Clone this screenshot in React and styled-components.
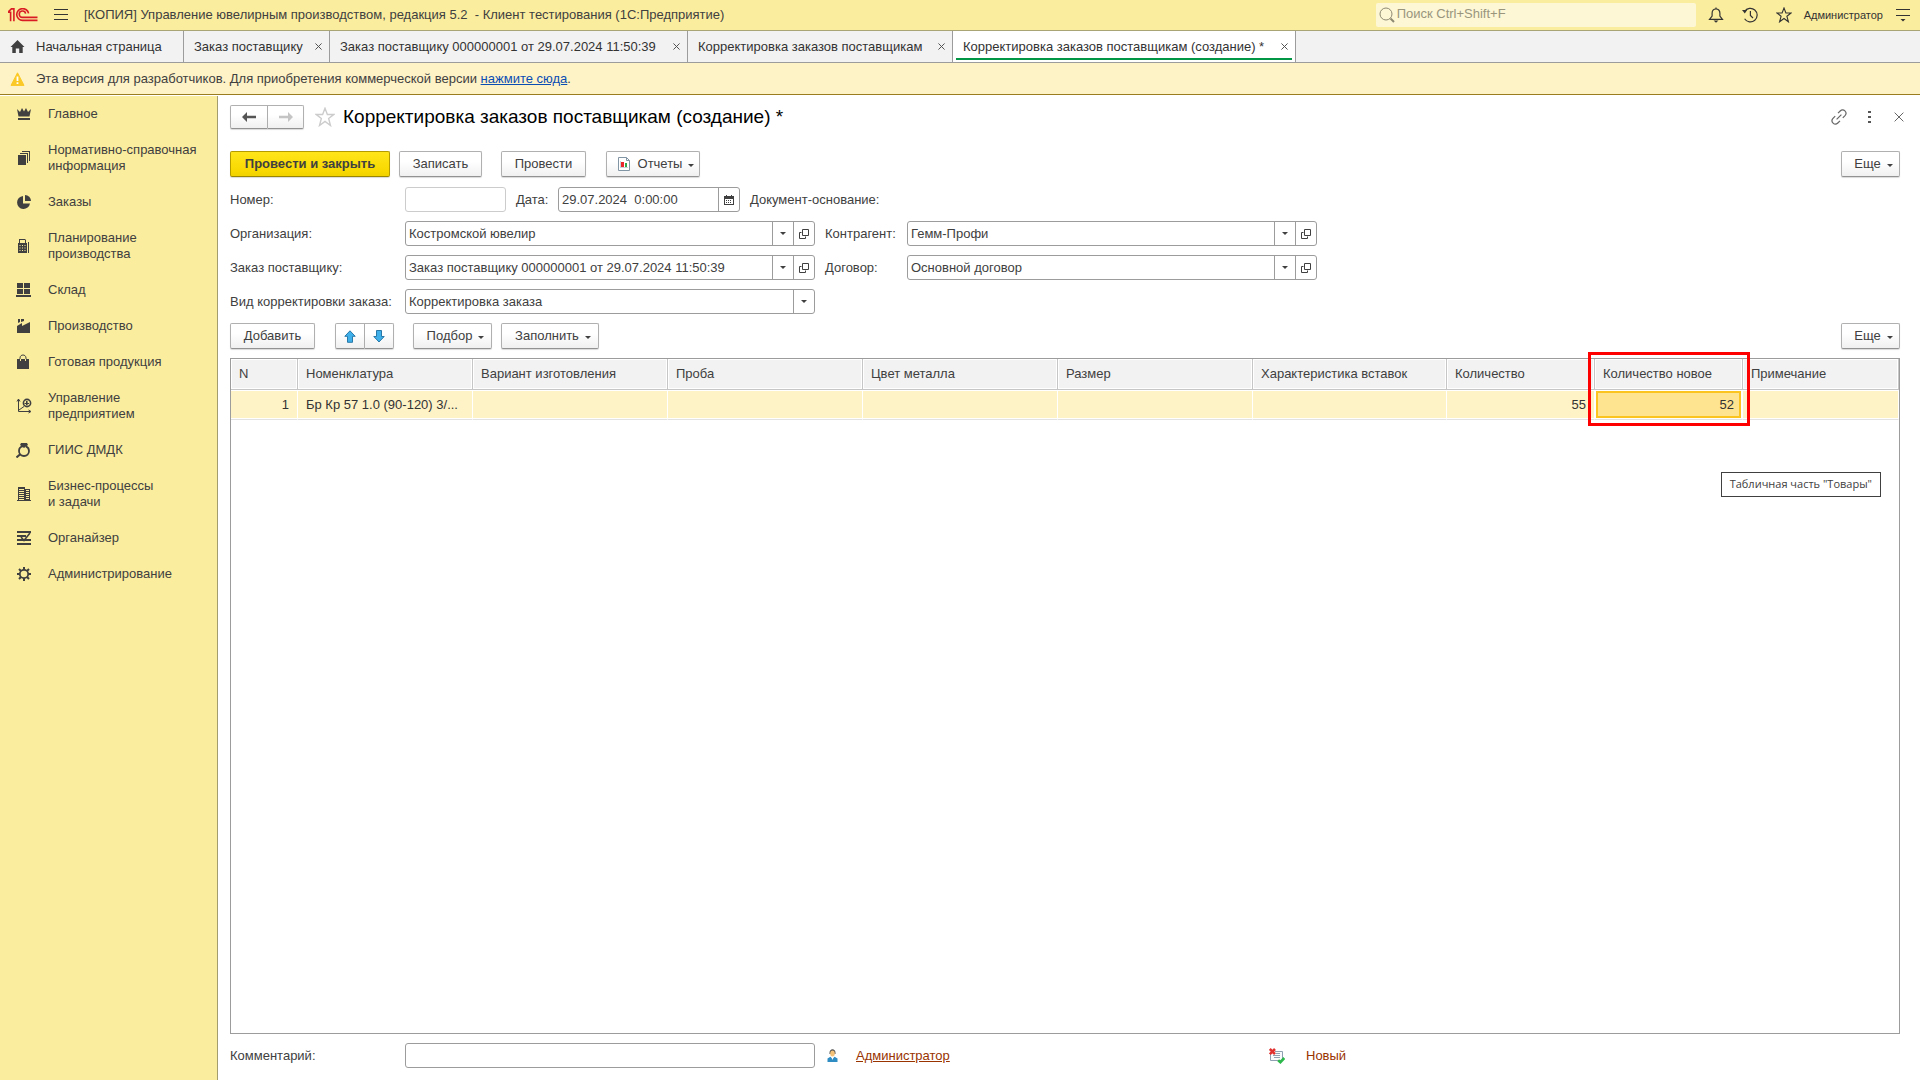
import React, { useState } from 'react';
import styled, { createGlobalStyle } from 'styled-components';

const GlobalStyle = createGlobalStyle`
  * {
    box-sizing: border-box;
  }

  body {
    margin: 0;
    background: #ffffff;
    color: #404040;
    font-family: 'Liberation Sans', Arial, sans-serif;
    font-size: 13px;
    line-height: 16px;
  }

  button,
  input,
  select {
    font: inherit;
    color: inherit;
  }

  svg {
    display: block;
    flex: none;
  }
`;

const Page = styled.div`
  display: flex;
  flex-direction: column;
  min-height: 100vh;
`;

const TitleBar = styled.header`
  display: flex;
  align-items: center;
  height: 31px;
  padding: 0 3px 0 8px;
  background: #fbed9e;
  border-bottom: 1px solid #aaa575;
`;

const IconButton = styled.button`
  display: flex;
  align-items: center;
  justify-content: center;
  width: ${(props) => props.$width || 28}px;
  height: 24px;
  padding: 0;
  border: 0;
  background: none;
  color: ${(props) => props.$color || '#333333'};
  cursor: pointer;
`;

const AppTitle = styled.div`
  flex: 1;
  margin-left: 9px;
  white-space: pre;
`;

const SearchBox = styled.label`
  display: flex;
  align-items: center;
  gap: 2px;
  width: 320px;
  height: 24px;
  margin-right: 6px;
  padding: 0 3px;
  border-radius: 2px;
  background: #fdf7d5;
  color: #8d8972;
`;

const SearchInput = styled.input`
  flex: 1;
  min-width: 0;
  padding: 0 0 2px;
  border: 0;
  outline: 0;
  background: none;

  &::placeholder {
    color: #99957d;
    opacity: 1;
  }
`;

const UserButton = styled.button`
  padding: 0;
  margin: 0 6px;
  border: 0;
  background: none;
  font-size: 11px;
  color: #333333;
`;

const TabBar = styled.nav`
  display: flex;
  height: 32px;
  background: #f2f2f2;
  border-bottom: 1px solid #9c9c9c;
`;

const Tab = styled.div`
  position: relative;
  display: flex;
  align-items: center;
  justify-content: space-between;
  width: ${(props) => props.$width}px;
  padding: 0 5px 0 10px;
  border-right: 1px solid #9c9c9c;
  background: ${(props) => (props.$active ? '#ffffff' : 'transparent')};

  &::after {
    content: '';
    display: ${(props) => (props.$active ? 'block' : 'none')};
    position: absolute;
    left: 3px;
    right: 3px;
    bottom: 2px;
    height: 2px;
    background: #009646;
  }
`;

const TabLink = styled.a`
  display: flex;
  align-items: center;
  gap: 11px;
  color: #333333;
  text-decoration: none;
  white-space: nowrap;
`;

const TabClose = styled.button`
  display: flex;
  padding: 2px;
  border: 0;
  background: none;
  color: #4d4d4d;
`;

const Notice = styled.div`
  display: flex;
  align-items: center;
  gap: 11px;
  height: 32px;
  padding: 0 10px;
  background: #fef2c7;
  border-bottom: 1px solid #9a7d1e;
`;

const NoticeLink = styled.a`
  color: #0a4db3;
`;

const Body = styled.div`
  display: flex;
  flex: 1;
`;

const Sidebar = styled.nav`
  flex: none;
  width: 218px;
  margin-top: 1px;
  background: #fbed9e;
  border-right: 1px solid #a39c6c;
`;

const SectionLink = styled.a`
  display: flex;
  align-items: center;
  gap: 16px;
  padding: 10px 8px 10px 16px;
  color: #404040;
  text-decoration: none;
  white-space: pre-line;
`;

const Main = styled.main`
  display: flex;
  flex: 1;
  flex-direction: column;
  gap: 9px;
  min-width: 0;
  padding: 10px 20px 12px 12px;
`;

const FormHeader = styled.div`
  display: flex;
  align-items: center;
  height: 24px;
  margin: 0 -14px 13px 0;
`;

const FormTitle = styled.h1`
  flex: 1;
  margin: 0 0 0 7px;
  color: #000000;
  font-size: 19px;
  font-weight: normal;
  line-height: 24px;
`;

const Toolbar = styled.div`
  display: flex;
  align-items: center;
  height: 26px;
`;

const Spacer = styled.div`
  width: ${(props) => props.$size}px;
  flex: ${(props) => (props.$size ? 'none' : '1')};
`;

const Button = styled.button`
  display: flex;
  align-items: center;
  justify-content: center;
  gap: 6px;
  width: ${(props) => props.$width}px;
  height: 26px;
  padding: ${(props) => (props.$menu ? '0 0 0 6px' : '0')};
  border: 1px solid ${(props) => (props.$primary ? '#b39b00' : '#b0b0b0')};
  border-bottom-color: ${(props) => (props.$primary ? '#9a8600' : '#929292')};
  border-radius: 2px;
  background: ${(props) =>
    props.$primary
      ? 'linear-gradient(#ffe51a, #f8d800 80%, #f2d200)'
      : 'linear-gradient(#ffffff, #ffffff 40%, #f0f0f0)'};
  box-shadow: 0 1px 1px rgba(0, 0, 0, 0.15);
  font-weight: ${(props) => (props.$primary ? 'bold' : 'normal')};
  white-space: nowrap;
  cursor: pointer;
`;

const ButtonIcon = styled.span`
  margin-right: 2px;
`;

const ButtonCaret = styled.span`
  padding-top: 3px;
`;

const ButtonPair = styled.div`
  display: flex;

  ${Button} {
    height: ${(props) => props.$height || 26}px;
  }

  ${Button}:first-child {
    border-radius: 2px 0 0 2px;
  }

  ${Button}:last-child {
    border-left: 0;
    border-radius: 0 2px 2px 0;
  }
`;

const Fields = styled.div`
  display: flex;
  flex-direction: column;
  gap: 9px;
  padding-top: 1px;
`;

const Row = styled.div`
  display: flex;
  align-items: center;
`;

const Label = styled.label`
  flex: none;
  width: 175px;
  white-space: nowrap;
`;

const SideLabel = styled.label`
  flex: none;
  width: ${(props) => props.$width}px;
  margin-left: 10px;
  white-space: nowrap;
`;

const Field = styled.div`
  display: flex;
  flex: 0 1 ${(props) => props.$width || 410}px;
  min-width: 0;
  height: 25px;
  overflow: hidden;
  border: 1px solid ${(props) => (props.$muted ? '#cccccc' : '#9c9c9c')};
  border-radius: 3px;
  background: #ffffff;
`;

const TextInput = styled.input`
  flex: 1;
  width: 100%;
  min-width: 0;
  padding: 0 3px;
  border: 0;
  outline: 0;
  background: none;
`;

const Select = styled.select`
  flex: 1;
  min-width: 0;
  padding: 0 3px;
  border: 0;
  outline: 0;
  appearance: none;
  background: none;
`;

const FieldArrow = styled.span`
  display: flex;
  flex: none;
  align-items: center;
  justify-content: center;
  width: 21px;
  border-left: 1px solid #9c9c9c;
  pointer-events: none;
`;

const FieldButton = styled.button`
  display: flex;
  flex: none;
  align-items: center;
  justify-content: center;
  width: 21px;
  padding: 0;
  border: 0;
  border-left: 1px solid #9c9c9c;
  background: none;
`;

const TableBox = styled.div`
  position: relative;
  flex: 1;
  border: 1px solid #9c9c9c;
`;

const Table = styled.table`
  width: 100%;
  table-layout: fixed;
  border-collapse: separate;
  border-spacing: 0;
`;

const Col = styled.col`
  width: ${(props) => (props.$width ? `${props.$width}px` : 'auto')};
`;

const HeadCell = styled.th`
  position: relative;
  height: 31px;
  padding: 0 8px;
  border-right: 1px solid #c6c6c6;
  border-bottom: 1px solid #c6c6c6;
  background: #f2f2f2;
  box-shadow: inset 0 0 0 1px #ffffff;
  color: #404040;
  font-weight: normal;
  text-align: left;
  white-space: nowrap;
`;

const Cell = styled.td`
  height: 30px;
  padding: 0 8px;
  overflow: hidden;
  border-right: 1px solid #ffffff;
  border-bottom: 1px solid #e2e2e2;
  background: ${(props) => (props.$current ? '#fee391' : '#fef2c7')};
  box-shadow: ${(props) =>
    props.$current
      ? 'inset 0 0 0 1px #ffffff, inset 0 0 0 3px #fcc41e'
      : 'inset 0 1px #ffffff, inset 0 -1px #ffffff'};
  color: #333333;
  text-align: ${(props) => (props.$number ? 'right' : 'left')};
  text-overflow: ellipsis;
  white-space: nowrap;
`;

const Highlight = styled.div`
  position: absolute;
  top: -7px;
  left: -7px;
  z-index: 1;
  width: 162px;
  height: 74px;
  border: 3px solid #ff0000;
  pointer-events: none;
`;

const Tooltip = styled.div`
  position: absolute;
  top: 113px;
  right: 18px;
  padding: 3px 8px 4px;
  border: 1px solid #404040;
  background: #ffffff;
  font-family: 'Open Sans', sans-serif;
  font-size: 11px;
  white-space: nowrap;
`;

const FooterLink = styled.a`
  width: 413px;
  margin-left: 18px;
  color: #993300;
`;

const Status = styled.span`
  margin-left: 21px;
  color: #993300;
`;

const LogoIcon = () => (
  <svg width="30" height="14" viewBox="0 0 30 14" fill="none" stroke="#d91c24" strokeWidth="1.6">
    <path d="M0 4.2H2.6V13.2M0.4 3.6L3.4 0.9H5.9V13.2" />
    <path d="M20.6 5.4A6 5.9 0 1 0 14.6 12.4H29.5" />
    <path d="M17.6 5.6A3.2 3.2 0 1 0 14.6 9.4H29.5" />
  </svg>
);

const MenuIcon = () => (
  <svg width="14" height="12" stroke="currentColor" strokeWidth="1">
    <path d="M0 0.5H14M0 5.5H14M0 10.5H14" />
  </svg>
);

const SearchIcon = () => (
  <svg width="16" height="16" fill="none" stroke="currentColor">
    <circle cx="7" cy="7" r="6" />
    <path d="M11.5 11.5L15 15" strokeWidth="2" />
  </svg>
);

const BellIcon = () => (
  <svg width="16" height="16" fill="none" stroke="currentColor" strokeWidth="1.2">
    <path d="M1.5 12.4H14.5L11.9 9V6.2C11.9 3.6 10.2 2 8 2S4.1 3.6 4.1 6.2V9Z" />
    <path d="M8 0.4V2" />
    <path d="M5.5 13.5H10.5L8 15.8Z" fill="currentColor" stroke="none" />
  </svg>
);

const HistoryIcon = () => (
  <svg width="16" height="16" fill="none" stroke="currentColor" strokeWidth="1.2">
    <path d="M2.6 4.5A6.8 6.8 0 1 1 2.6 11.7" />
    <path d="M8.4 4V8.4L11 11" />
    <path d="M0 3H5.2L2.8 6.6Z" fill="currentColor" stroke="none" />
  </svg>
);

const StarIcon = ({ size }) => (
  <svg width={size} height={size} viewBox="0 0 16 16" fill="none" stroke="currentColor" strokeWidth="1.1">
    <path d="M8 1L9.9 6H15L10.9 9.2L12.4 14.8L8 11.5L3.6 14.8L5.1 9.2L1 6H6.1Z" />
  </svg>
);

const PanelIcon = () => (
  <svg width="14" height="13" stroke="currentColor">
    <path d="M0 0.5H14M0 6.5H14" />
    <path d="M4.5 10H9.5L7 12.6Z" fill="currentColor" stroke="none" />
  </svg>
);

const CrossIcon = ({ size }) => (
  <svg width={size} height={size} viewBox="0 0 8 8" stroke="currentColor" strokeWidth={size > 8 ? 0.8 : 1.1}>
    <path d="M0.5 0.5L7.5 7.5M7.5 0.5L0.5 7.5" />
  </svg>
);

const HomeIcon = () => (
  <svg width="15" height="13" viewBox="0 0 15 13" fill="#404040">
    <path d="M7.5 0L14.5 7H12.7V13H9.2V8.4H5.8V13H2.3V7H0.5Z" />
  </svg>
);

const WarningIcon = () => (
  <svg width="15" height="14" viewBox="0 0 15 14">
    <path d="M7.5 0.8L14 13.4H1Z" fill="#fbc926" stroke="#fbc926" strokeLinejoin="round" />
    <path d="M7.5 4.5V9M7.5 10.2V12" stroke="#ffffff" strokeWidth="1.8" />
  </svg>
);

const LinkIcon = () => (
  <svg width="16" height="16" fill="none" stroke="currentColor" strokeWidth="1.2">
    <path d="M7 4.2L9.2 2C10.6 0.6 12.6 0.6 13.9 1.9S15.3 5.2 14 6.6L11.8 8.8" />
    <path d="M9 11.8L6.8 14C5.4 15.4 3.4 15.4 2.1 14.1S0.7 10.8 2 9.4L4.2 7.2" />
    <path d="M5.6 10.4L10.4 5.6" />
  </svg>
);

const DotsIcon = () => (
  <svg width="3" height="12" fill="currentColor">
    <path d="M0 0H3V2H0ZM0 5H3V7H0ZM0 10H3V12H0Z" />
  </svg>
);

const CaretIcon = () => (
  <svg width="6" height="3" fill="#404040">
    <path d="M0 0H6L3 3Z" />
  </svg>
);

const OpenIcon = () => (
  <svg width="10" height="10" fill="none" stroke="#404040">
    <path d="M3.5 0.5H9.5V6.5H3.5ZM2.5 3.5H0.5V9.5H6.5V7.5" />
  </svg>
);

const CalendarIcon = () => (
  <svg width="10" height="10" fill="#404040">
    <path d="M0 1H2V0H3V1H7V0H8V1H10V10H0ZM1 4V9H9V4Z" fillRule="evenodd" />
    <path d="M2 5H3V6H2ZM4 5H5V6H4ZM6 5H7V6H6ZM2 7H3V8H2ZM4 7H5V8H4ZM6 7H7V8H6Z" />
  </svg>
);

const BackIcon = ({ flip }) => (
  <svg width="14" height="10" viewBox="0 0 14 10" fill={flip ? '#c4c4c4' : '#555555'}>
    <path d={flip ? 'M14 5L9 0V3.8H0V6.2H9V10Z' : 'M0 5L5 0V3.8H14V6.2H5V10Z'} />
  </svg>
);

const MoveIcon = ({ down }) => (
  <svg width="12" height="13" viewBox="0 0 12 13" fill="#3fb0ea" stroke="#2878a8">
    <path
      d={
        down
          ? 'M6 12L0.8 6.5H3.5V0.5H8.5V6.5H11.2Z'
          : 'M6 0.8L11.2 6.3H8.5V12.3H3.5V6.3H0.8Z'
      }
    />
  </svg>
);

const ReportIcon = () => (
  <svg width="12" height="14" viewBox="0 0 12 14">
    <path d="M0.5 0.5H8.5L11.5 3.5V13.5H0.5Z" fill="#ffffff" stroke="#8295a5" />
    <path d="M8.5 0.5V3.5H11.5" fill="none" stroke="#8295a5" />
    <path d="M2 4H3V10H2ZM2 10H10V11H2Z" fill="#c9d2d8" />
    <path d="M3 5H6V10H3Z" fill="#e8262b" />
    <path d="M7 6H9V10H7Z" fill="#2fa84a" />
  </svg>
);

const PersonIcon = () => (
  <svg width="11" height="13" viewBox="0 0 11 13">
    <path d="M2.5 4C2.5 -1 8.5 -1 8.5 4V5H2.5Z" fill="#4c4c4c" />
    <ellipse cx="5.5" cy="4.6" rx="2.3" ry="3" fill="#f5c27a" />
    <path d="M0.5 13V9.5L3.4 7.8L5.5 9.5L7.6 7.8L10.5 9.5V13Z" fill="#2f8dc4" />
    <path d="M4.3 8L5.5 11L6.7 8Z" fill="#ffffff" />
  </svg>
);

const StatusIcon = () => (
  <svg width="16" height="16" viewBox="0 0 16 16" fill="none">
    <path d="M1.5 4.5V12.5H13.5V3.5H6" fill="#f8fafc" stroke="#8fa0b2" />
    <path d="M7 5.5H11M4 7.5H11M5 9.5H11" stroke="#8fa0b2" />
    <path d="M0.8 1L6 6.2M6 1L0.8 6.2" stroke="#e03030" strokeWidth="2.6" />
    <path d="M9.2 12.2L11.4 14.2L15.3 10" stroke="#2db84b" strokeWidth="2.6" />
  </svg>
);

const sectionIcons = {
  crown: <path d="M1 3L4 6L6 2L8 5.5L10 2L12 6L15 3L13.5 10.5H2.5ZM2 12H14V14H2Z" />,
  copies: <path d="M2 5H10V15H2ZM4 3H12V13H11V4H4ZM6 1H14V11H13V2H6Z" />,
  pie: (
    <>
      <path d="M7 2A6.5 6.5 0 1 0 14 9.5H7Z" />
      <path d="M9 1A6 6 0 0 1 15 7H9Z" />
    </>
  ),
  fiscal: (
    <path
      d="M3 1H9L10 2V5H11V15H2V5H3ZM4 2V5H9V2ZM12 4H13V15H12ZM3.5 7V8H4.5V7ZM6 7V8H7V7ZM8.5 7V8H9.5V7ZM3.5 9.5V10.5H4.5V9.5ZM6 9.5V10.5H7V9.5ZM8.5 9.5V10.5H9.5V9.5ZM3.5 12V13H4.5V12ZM6 12V13H7V12ZM8.5 12V13H9.5V12Z"
      fillRule="evenodd"
    />
  ),
  blocks: <path d="M1 1H7V6H1ZM8 1H14V6H8ZM1 7H7V12H1ZM8 7H14V12H8ZM0 13H15V15H0Z" />,
  factory: <path d="M1 15V8L6 5V8L14 4V15ZM2 1H4V4L2 5ZM5 1H8V3L5 4Z" />,
  bag: (
    <>
      <path d="M1 5H13V15H1Z" />
      <path d="M4 7V4C4 0 10 0 10 4V7" fill="none" stroke="#404040" />
      <path d="M4.5 5V7M9.5 5V7" stroke="#fbed9e" />
    </>
  ),
  chart: (
    <>
      <path d="M2.5 1V13.5H14M1 3.5L2.5 1L4 3.5M12.5 12L15 13.5L12.5 15M3 12L8 8.5" fill="none" stroke="#404040" />
      <circle cx="11" cy="5" r="3.6" fill="none" stroke="#404040" strokeWidth="1.6" />
      <path d="M10 3H11.6V7.2H10ZM8.5 5H13V6H8.5Z" />
    </>
  ),
  ring: (
    <>
      <circle cx="8" cy="9" r="5" fill="none" stroke="#404040" strokeWidth="1.8" strokeDasharray="22 3" />
      <path d="M5 1H11L12 3L8 6L4 3Z" />
      <path d="M0.5 15.5L4.5 12" stroke="#404040" strokeWidth="2" />
    </>
  ),
  building: (
    <path
      d="M2 1H9V15H2ZM3 3V4H8V3ZM3 5V6H8V5ZM3 7V8H8V7ZM3 9V10H8V9ZM3 11V12H8V11ZM3 13V14H8V13ZM9 3H14V15H9ZM10 4V5H13V4ZM10 6V7H13V6ZM10 8V9H13V8ZM10 10V11H13V10ZM10 12V13H13V12ZM1 14H2V15H1ZM14 14H15V15H14Z"
      fillRule="evenodd"
    />
  ),
  organizer: (
    <>
      <path d="M1 1H15V3H1ZM1 5H10V7H1ZM1 9H15V11H1ZM1 13H15V15H1Z" />
      <path d="M5 7L8 10.5L14 3" fill="none" stroke="#404040" strokeWidth="1.6" />
    </>
  ),
  gear: (
    <>
      <circle cx="8" cy="8" r="4.2" fill="none" stroke="#404040" strokeWidth="1.8" />
      <path
        d="M8 1V4M8 12V15M1 8H4M12 8H15M3 3L5.2 5.2M10.8 10.8L13 13M13 3L10.8 5.2M5.2 10.8L3 13"
        stroke="#404040"
        strokeWidth="2"
      />
    </>
  ),
};

const sections = [
  { icon: 'crown', title: 'Главное' },
  { icon: 'copies', title: 'Нормативно-справочная\nинформация' },
  { icon: 'pie', title: 'Заказы' },
  { icon: 'fiscal', title: 'Планирование\nпроизводства' },
  { icon: 'blocks', title: 'Склад' },
  { icon: 'factory', title: 'Производство' },
  { icon: 'bag', title: 'Готовая продукция' },
  { icon: 'chart', title: 'Управление\nпредприятием' },
  { icon: 'ring', title: 'ГИИС ДМДК' },
  { icon: 'building', title: 'Бизнес-процессы\nи задачи' },
  { icon: 'organizer', title: 'Органайзер' },
  { icon: 'gear', title: 'Администрирование' },
];

const tabs = [
  { title: 'Начальная страница', width: 184, home: true },
  { title: 'Заказ поставщику', width: 146 },
  { title: 'Заказ поставщику 000000001 от 29.07.2024 11:50:39', width: 358 },
  { title: 'Корректировка заказов поставщикам', width: 265 },
  { title: 'Корректировка заказов поставщикам (создание) *', width: 343, active: true },
];

const columns = [
  { title: 'N', width: 67, value: '1', number: true },
  { title: 'Номенклатура', width: 175, value: 'Бр Кр 57 1.0 (90-120) 3/...' },
  { title: 'Вариант изготовления', width: 195 },
  { title: 'Проба', width: 195 },
  { title: 'Цвет металла', width: 195 },
  { title: 'Размер', width: 195 },
  { title: 'Характеристика вставок', width: 194 },
  { title: 'Количество', width: 148, value: '55', number: true },
  { title: 'Количество новое', width: 148, value: '52', number: true, current: true },
  { title: 'Примечание' },
];

function SelectField({ id, value, withOpen }) {
  return (
    <Field>
      <Select id={id} defaultValue={value}>
        <option>{value}</option>
      </Select>
      <FieldArrow>
        <CaretIcon />
      </FieldArrow>
      {withOpen && (
        <FieldButton type="button" aria-label="Открыть">
          <OpenIcon />
        </FieldButton>
      )}
    </Field>
  );
}

function MenuButton({ children, width }) {
  return (
    <Button type="button" $width={width} $menu>
      {children}
      <ButtonCaret>
        <CaretIcon />
      </ButtonCaret>
    </Button>
  );
}

function App() {
  const [date, setDate] = useState('29.07.2024  0:00:00');
  const [comment, setComment] = useState('');

  return (
    <Page>
      <GlobalStyle />
      <TitleBar>
        <LogoIcon />
        <Spacer $size={9} />
        <IconButton type="button" aria-label="Меню"><MenuIcon /></IconButton>
        <AppTitle>[КОПИЯ] Управление ювелирным производством, редакция 5.2  - Клиент тестирования (1С:Предприятие)</AppTitle>
        <SearchBox>
          <SearchIcon />
          <SearchInput type="search" placeholder="Поиск Ctrl+Shift+F" aria-label="Поиск" />
        </SearchBox>
        <IconButton type="button" aria-label="Уведомления"><BellIcon /></IconButton>
        <Spacer $size={6} />
        <IconButton type="button" aria-label="История"><HistoryIcon /></IconButton>
        <Spacer $size={6} />
        <IconButton type="button" aria-label="Избранное"><StarIcon size={16} /></IconButton>
        <UserButton type="button">Администратор</UserButton>
        <IconButton type="button" aria-label="Настройки"><PanelIcon /></IconButton>
      </TitleBar>

      <TabBar>
        {tabs.map((tab) => (
          <Tab key={tab.title} $width={tab.width} $active={tab.active}>
            <TabLink href="#">
              {tab.home && <HomeIcon />}
              {tab.title}
            </TabLink>
            {!tab.home && (
              <TabClose type="button" aria-label="Закрыть"><CrossIcon size={7} /></TabClose>
            )}
          </Tab>
        ))}
      </TabBar>

      <Notice>
        <WarningIcon />
        <span>
          Эта версия для разработчиков. Для приобретения коммерческой версии{' '}
          <NoticeLink href="#">нажмите сюда</NoticeLink>.
        </span>
      </Notice>

      <Body>
        <Sidebar>
          {sections.map((section) => (
            <SectionLink key={section.title} href="#">
              <svg width="16" height="16" fill="#404040">{sectionIcons[section.icon]}</svg>
              {section.title}
            </SectionLink>
          ))}
        </Sidebar>

        <Main>
          <FormHeader>
            <ButtonPair $height={24}>
              <Button type="button" $width={38} aria-label="Назад"><BackIcon /></Button>
              <Button type="button" $width={36} aria-label="Вперед"><BackIcon flip /></Button>
            </ButtonPair>
            <Spacer $size={10} />
            <IconButton type="button" $width={22} $color="#cccccc" aria-label="В избранное">
              <StarIcon size={20} />
            </IconButton>
            <FormTitle>Корректировка заказов поставщикам (создание) *</FormTitle>
            <IconButton type="button" $width={30} $color="#666666" aria-label="Ссылка"><LinkIcon /></IconButton>
            <IconButton type="button" $width={30} $color="#555555" aria-label="Еще"><DotsIcon /></IconButton>
            <IconButton type="button" $width={30} $color="#666666" aria-label="Закрыть"><CrossIcon size={10} /></IconButton>
          </FormHeader>

          <Toolbar>
            <Button type="button" $width={160} $primary>Провести и закрыть</Button>
            <Spacer $size={9} />
            <Button type="button" $width={83}>Записать</Button>
            <Spacer $size={19} />
            <Button type="button" $width={85}>Провести</Button>
            <Spacer $size={20} />
            <MenuButton width={94}>
              <ButtonIcon><ReportIcon /></ButtonIcon>
              Отчеты
            </MenuButton>
            <Spacer />
            <MenuButton width={59}>Еще</MenuButton>
          </Toolbar>

          <Fields>
            <Row>
              <Label htmlFor="number">Номер:</Label>
              <Field $width={101} $muted>
                <TextInput id="number" />
              </Field>
              <SideLabel htmlFor="date" $width={42}>Дата:</SideLabel>
              <Field $width={182}>
                <TextInput id="date" value={date} onChange={(e) => setDate(e.target.value)} />
                <FieldButton type="button" aria-label="Календарь"><CalendarIcon /></FieldButton>
              </Field>
              <SideLabel as="span" $width={140}>Документ-основание:</SideLabel>
            </Row>
            <Row>
              <Label htmlFor="company">Организация:</Label>
              <SelectField id="company" value="Костромской ювелир" withOpen />
              <SideLabel htmlFor="partner" $width={82}>Контрагент:</SideLabel>
              <SelectField id="partner" value="Гемм-Профи" withOpen />
            </Row>
            <Row>
              <Label htmlFor="order">Заказ поставщику:</Label>
              <SelectField id="order" value="Заказ поставщику 000000001 от 29.07.2024 11:50:39" withOpen />
              <SideLabel htmlFor="contract" $width={82}>Договор:</SideLabel>
              <SelectField id="contract" value="Основной договор" withOpen />
            </Row>
            <Row>
              <Label htmlFor="kind">Вид корректировки заказа:</Label>
              <SelectField id="kind" value="Корректировка заказа" />
            </Row>
          </Fields>

          <Toolbar>
            <Button type="button" $width={85}>Добавить</Button>
            <Spacer $size={20} />
            <ButtonPair>
              <Button type="button" $width={30} aria-label="Вверх"><MoveIcon /></Button>
              <Button type="button" $width={29} aria-label="Вниз"><MoveIcon down /></Button>
            </ButtonPair>
            <Spacer $size={19} />
            <MenuButton width={79}>Подбор</MenuButton>
            <Spacer $size={9} />
            <MenuButton width={98}>Заполнить</MenuButton>
            <Spacer />
            <MenuButton width={59}>Еще</MenuButton>
          </Toolbar>

          <TableBox>
            <Table>
              <colgroup>
                {columns.map((column) => (
                  <Col key={column.title} $width={column.width} />
                ))}
              </colgroup>
              <thead>
                <tr>
                  {columns.map((column) => (
                    <HeadCell key={column.title} scope="col">
                      {column.title}
                      {column.current && <Highlight />}
                    </HeadCell>
                  ))}
                </tr>
              </thead>
              <tbody>
                <tr>
                  {columns.map((column) => (
                    <Cell key={column.title} $number={column.number} $current={column.current}>
                      {column.value}
                    </Cell>
                  ))}
                </tr>
              </tbody>
            </Table>
            <Tooltip role="tooltip">Табличная часть "Товары"</Tooltip>
          </TableBox>

          <Row>
            <Label htmlFor="comment">Комментарий:</Label>
            <Field>
              <TextInput id="comment" value={comment} onChange={(e) => setComment(e.target.value)} />
            </Field>
            <Spacer $size={12} />
            <PersonIcon />
            <FooterLink href="#">Администратор</FooterLink>
            <StatusIcon />
            <Status>Новый</Status>
          </Row>
        </Main>
      </Body>
    </Page>
  );
}

export default App;
